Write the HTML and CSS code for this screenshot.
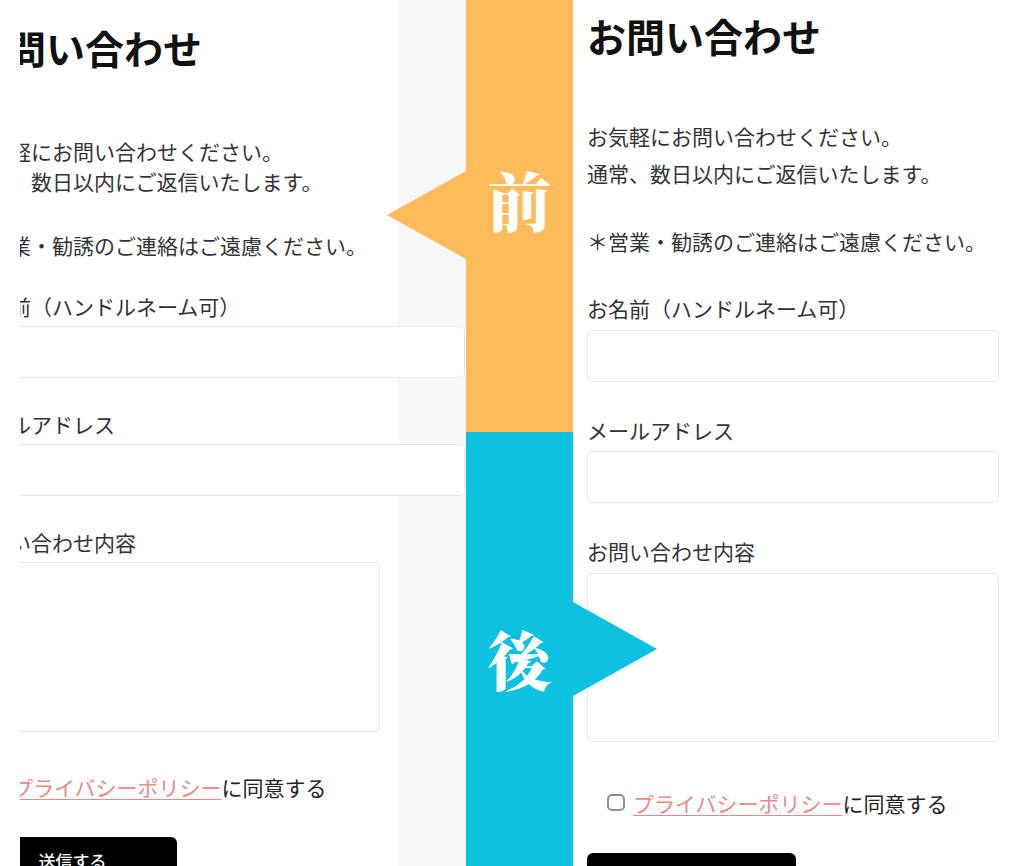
FILE: index.html
```html
<!DOCTYPE html>
<html lang="ja">
<head>
<meta charset="utf-8">
<title>お問い合わせ</title>
<link rel="stylesheet" href="styles.css">
</head>
<body>
<main class="compare">
  <section class="pane pane-before">
    <div class="viewport">
      <div class="page page-old">
        <h1 class="title">お問い合わせ</h1>
        <p class="lead">お気軽にお問い合わせください。<br>通常、数日以内にご返信いたします。</p>
        <p class="lead">＊営業・勧誘のご連絡はご遠慮ください。</p>
        <form class="form">
          <label class="field">
            <span class="field-label">お名前（ハンドルネーム可）</span>
            <input class="input" type="text">
          </label>
          <label class="field">
            <span class="field-label">メールアドレス</span>
            <input class="input" type="email">
          </label>
          <label class="field">
            <span class="field-label">お問い合わせ内容</span>
            <textarea class="input textarea"></textarea>
          </label>
          <p class="agree"><a href="#">プライバシーポリシー</a>に同意する</p>
          <button class="submit" type="button">送信する</button>
        </form>
      </div>
    </div>
  </section>

  <div class="divider">
    <div class="band band-before"><span class="mark">前</span></div>
    <div class="band band-after"><span class="mark">後</span></div>
  </div>

  <section class="pane pane-after">
    <div class="page page-new">
      <h1 class="title">お問い合わせ</h1>
      <p class="lead">お気軽にお問い合わせください。<br>通常、数日以内にご返信いたします。</p>
      <p class="lead">＊営業・勧誘のご連絡はご遠慮ください。</p>
      <form class="form">
        <label class="field">
          <span class="field-label">お名前（ハンドルネーム可）</span>
          <input class="input" type="text">
        </label>
        <label class="field">
          <span class="field-label">メールアドレス</span>
          <input class="input" type="email">
        </label>
        <label class="field">
          <span class="field-label">お問い合わせ内容</span>
          <textarea class="input textarea"></textarea>
        </label>
        <p class="agree"><input class="check" type="checkbox"><a href="#">プライバシーポリシー</a>に同意する</p>
        <button class="submit" type="button">送信する</button>
      </form>
    </div>
  </section>
</main>
</body>
</html>
```

FILE: styles.css
```css
* {
  box-sizing: border-box;
}

html,
body {
  margin: 0;
  padding: 0;
}

body {
  width: 1024px;
  height: 866px;
  overflow: hidden;
  background: #fff;
  color: #333;
  font-family: "Noto Sans CJK JP", "Noto Sans", sans-serif;
}

.compare {
  display: flex;
  height: 866px;
}

/* ---------- shared page pieces ---------- */

.title {
  margin: 0;
  font-size: 39px;
  line-height: 47px;
  font-weight: 700;
  color: #111;
}

.lead {
  margin: 0;
  font-size: 21px;
}

.form {
  display: flex;
  flex-direction: column;
  align-items: flex-start;
}

.field {
  display: block;
  width: 100%;
}

.field-label {
  display: block;
  font-size: 21px;
  line-height: 30px;
}

.input {
  display: block;
  width: 100%;
  height: 52px;
  margin: 0;
  padding: 0 12px;
  border: 1px solid #e7e7e7;
  border-radius: 5px;
  background: #fff;
  font: inherit;
  resize: none;
}

.agree {
  display: flex;
  align-items: center;
  margin: 0;
  font-size: 21px;
  line-height: 30px;
  color: #222;
}

.agree a {
  color: #f28585;
  text-decoration: underline;
  text-decoration-thickness: 1px;
  text-underline-offset: 3px;
}

.submit {
  display: block;
  width: 209px;
  height: 48px;
  margin: 0;
  padding: 0;
  border: 0;
  border-radius: 6px;
  background: #000;
  color: #fff;
  font-family: "Noto Sans CJK JP", sans-serif;
  font-size: 17px;
  font-weight: 500;
  line-height: 48px;
  text-align: center;
}

/* ---------- old layout (left) ---------- */

.pane-before {
  display: flex;
  width: 466px;
  flex: none;
  padding-left: 20px;
  background: linear-gradient(to right, #fff 398px, #f7f7f7 398px);
}

.viewport {
  flex: 1;
  overflow: hidden;
}

.page-old {
  width: 497px;
  margin-left: -52px;
  padding-top: 24px;
}

.page-old .title {
  margin-bottom: 65px;
}

.page-old .lead {
  line-height: 30px;
}

.page-old .lead + .lead {
  margin-top: 34px;
}

.page-old .form {
  margin-top: 31px;
}

.page-old .field-label {
  margin-bottom: 5px;
}

.page-old .field + .field {
  margin-top: 31px;
}

.page-old .textarea {
  width: 412px;
  height: 170px;
}

.page-old .agree {
  margin-top: 40px;
  padding-left: 44px;
}

.page-old .submit {
  margin-top: 35px;
}

/* ---------- divider with the two tags ---------- */

.divider {
  position: relative;
  z-index: 2;
  display: flex;
  flex-direction: column;
  width: 107px;
  flex: none;
}

.band {
  position: relative;
  display: flex;
  justify-content: center;
  align-items: center;
  color: #fff;
}

.mark {
  font-family: "Noto Serif CJK JP", "Noto Sans CJK JP", serif;
  font-size: 64px;
  font-weight: 900;
  line-height: 1;
}

.band-before {
  height: 432px;
  padding-bottom: 36px;
  background: #fdbb5a;
}

.band-after {
  flex: 1;
  padding-top: 16px;
  background: #0dc1e0;
}

.band-before::before {
  content: "";
  position: absolute;
  top: 171px;
  left: -79px;
  border-style: solid;
  border-width: 44px 79px 44px 0;
  border-color: transparent #fdbb5a transparent transparent;
}

.band-after::after {
  content: "";
  position: absolute;
  top: 170px;
  right: -84px;
  border-style: solid;
  border-width: 47.5px 0 47.5px 84px;
  border-color: transparent transparent transparent #0dc1e0;
}

/* ---------- new layout (right) ---------- */

.pane-after {
  flex: 1;
  padding: 12px 0 0 14px;
}

.page-new {
  width: 412px;
}

.page-new .title {
  margin-bottom: 59px;
}

.page-new .lead {
  line-height: 37px;
}

.page-new .lead + .lead {
  margin-top: 31px;
}

.page-new .form {
  margin-top: 33px;
}

.page-new .field-label {
  margin-bottom: 6.5px;
}

.page-new .field + .field {
  margin-top: 33px;
}

.page-new .textarea {
  height: 169px;
}

.page-new .agree {
  margin-top: 46px;
  padding-left: 20px;
}

.check {
  appearance: none;
  -webkit-appearance: none;
  flex: none;
  width: 18px;
  height: 17px;
  margin: 0 8px 0 0;
  border: 2px solid #8e8e8e;
  border-radius: 5px;
  background: #fff;
}

.page-new .submit {
  margin-top: 35px;
}
```
